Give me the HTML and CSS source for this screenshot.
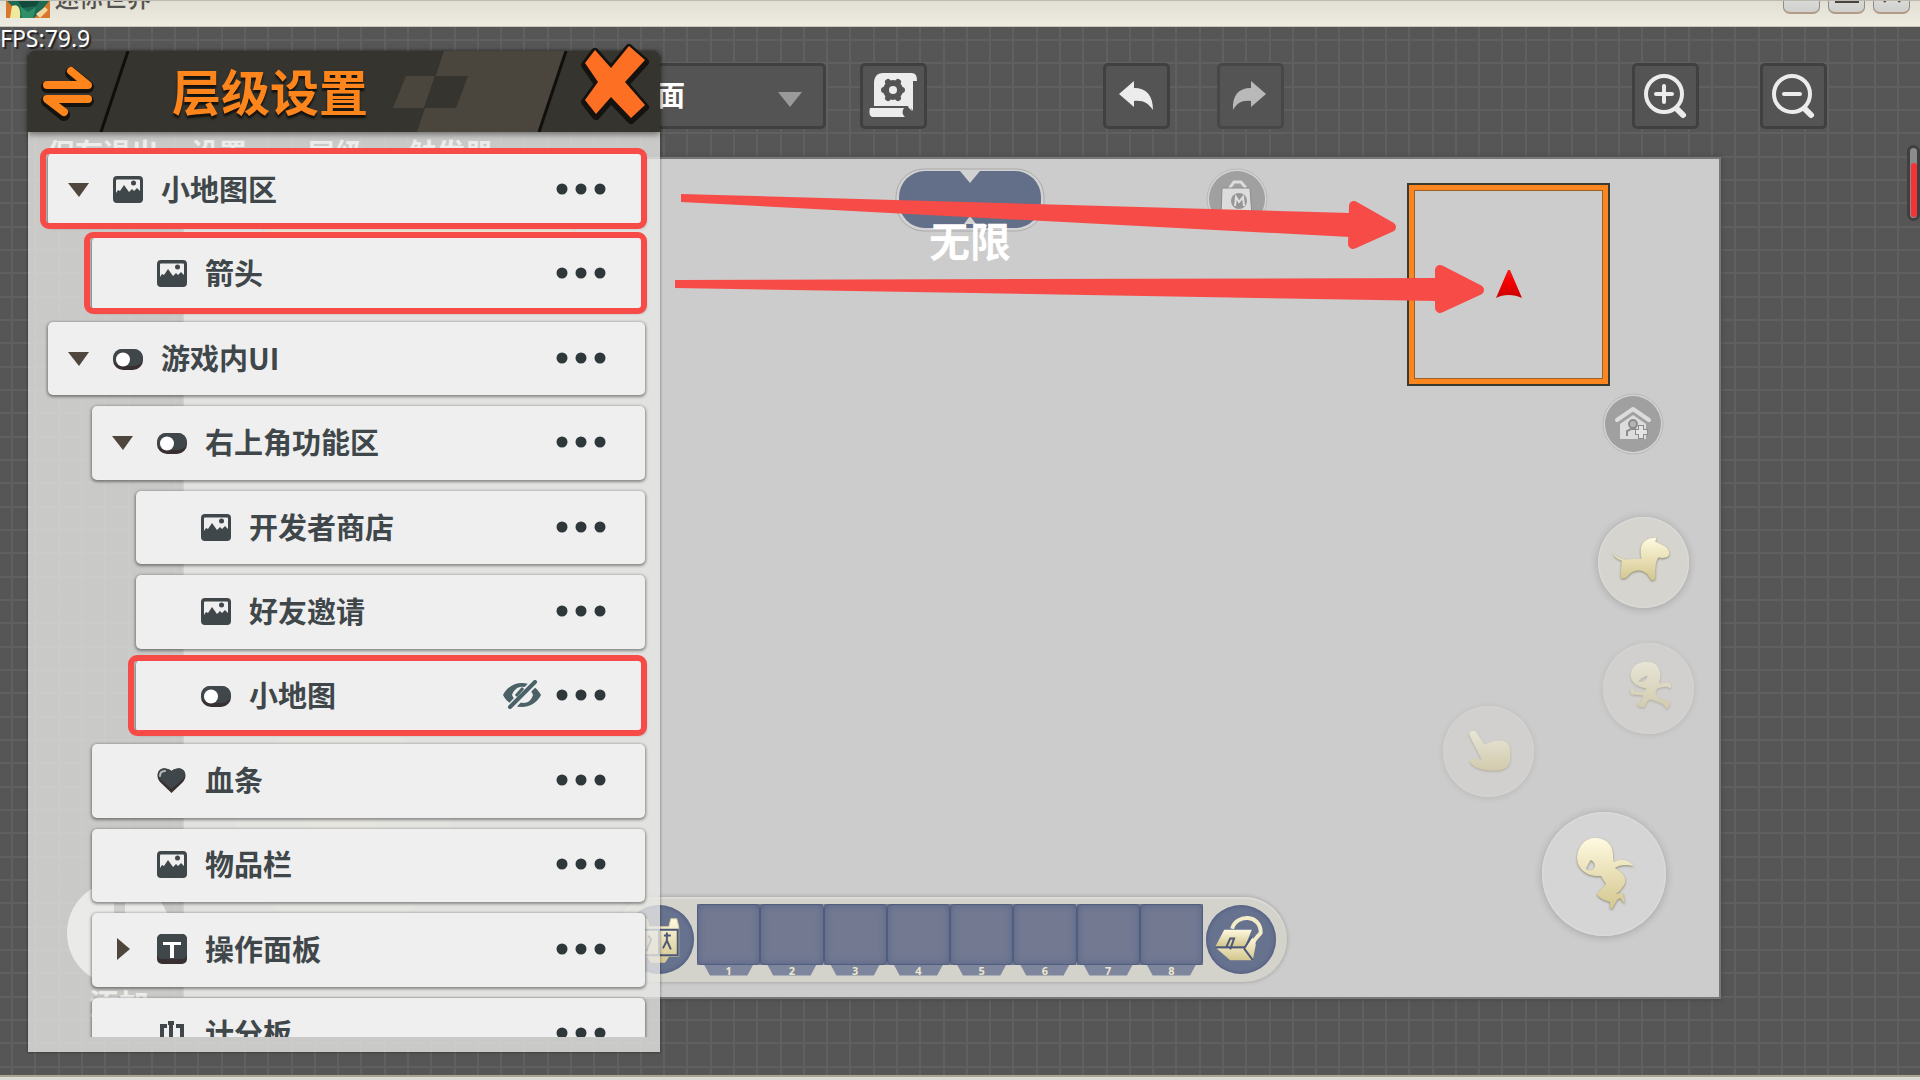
FILE: index.html
```html
<!DOCTYPE html>
<html lang="zh-CN">
<head>
<meta charset="utf-8">
<title>迷你世界</title>
<link rel="stylesheet" href="styles.css">
</head>
<body>
<svg class="defs" aria-hidden="true">
  <defs>
    <linearGradient id="gold" x1="0" y1="0" x2="0" y2="1"><stop offset="0" stop-color="#fffae0"/><stop offset="1" stop-color="#d3c68e"/></linearGradient>
    <linearGradient id="red" x1="0" y1="0" x2="0" y2="1"><stop offset="0" stop-color="#f02020"/><stop offset=".4" stop-color="#f80000"/><stop offset="1" stop-color="#c80000"/></linearGradient>
    <symbol id="i-image" viewBox="0 0 30 30">
      <path fill="#3f474a" fill-rule="evenodd" d="M4 2h22a4 4 0 0 1 4 4v19a4 4 0 0 1-4 4H4a4 4 0 0 1-4-4V6a4 4 0 0 1 4-4zM4 5.500a1 1 0 0 0-1 1V19l2-3 2 1 4-6 5 7 3-3 2 2 3-3 3 3V6.500a1 1 0 0 0-1-1z"/>
      <circle cx="20.500" cy="9" r="2.500" fill="#3f474a"/>
    </symbol>
    <symbol id="i-toggle" viewBox="0 0 30 30">
      <rect x="0" y="6" width="30" height="21" rx="10" fill="#382f30"/>
      <rect x="0" y="6" width="30" height="17" rx="9" fill="#3f474a"/>
      <circle cx="10" cy="16.500" r="7" fill="#fff"/>
    </symbol>
    <symbol id="i-heart" viewBox="0 0 30 30">
      <path fill="#382f30" d="M14.500 28L3 17C-4 8 5-1 14.500 6 24-1 33 8 26 17z"/>
      <path fill="#3f474a" d="M14.500 24L3 14C-3 7 5-1 14.500 6 24-1 32 7 26 14z"/>
      <path fill="none" stroke="#b5bbbc" stroke-width="2" stroke-linecap="round" d="M3 11c0-3 2-5 5-5"/>
    </symbol>
    <symbol id="i-text" viewBox="0 0 30 30">
      <rect width="30" height="30" rx="5" fill="#382f30"/>
      <rect width="30" height="25" rx="5" fill="#3f474a"/>
      <path fill="#fff" d="M6 8h18v3h-7v13h-4V11H6z"/>
    </symbol>
    <symbol id="i-score" viewBox="0 0 30 30">
      <path fill="none" stroke="#3f474a" stroke-width="4" d="M10 8H5v19h5M19 8h6v19h-6M14 4v24M11 5h6"/>
    </symbol>
    <symbol id="i-hidden" viewBox="0 0 40 30">
      <path fill="#4a6166" fill-rule="evenodd" d="M1 15C9-1 31-1 39 15 31 31 9 31 1 15zm9 0c3 8 17 13 21 0-3-10-17-12-21 0z"/>
      <path stroke="#efefef" stroke-width="8" d="M8 28L33 2"/>
      <path stroke="#4a6166" stroke-width="4" stroke-linecap="round" d="M8 27L33 2"/>
      <path stroke="#4a6166" stroke-width="3" d="M14 16l7-8"/>
    </symbol>
    <symbol id="i-down" viewBox="0 0 22 16"><path fill="#4e453c" d="M0 2h21L11 16z"/></symbol>
    <symbol id="i-right" viewBox="0 0 22 24"><path fill="#4e453c" d="M5 1l13 11L5 23z"/></symbol>
    <symbol id="i-dots" viewBox="0 0 50 12"><g fill="#2e373a"><circle cx="6" cy="6" r="5.500"/><circle cx="25" cy="6" r="5.500"/><circle cx="44" cy="6" r="5.500"/></g></symbol>
  </defs>
</svg>

<header class="titlebar">
  <svg class="app-icon" viewBox="0 0 44 44" aria-hidden="true">
    <rect width="44" height="44" rx="5" fill="#1d6b55"/>
    <path fill="#d9772a" d="M0 26l6 6 5 12H0zM44 26l-10 12-6 6h16z"/>
    <path fill="#124a3b" d="M10 22l16 2 12-4-8 12-14 2z"/>
    <path fill="#f0e89c" d="M6 32c6-3 9 2 8 12H4z"/>
    <path fill="#2f8f66" d="M14 32l8 6 8-5-3 11H16z"/>
    <path fill="#f3d7a0" d="M30 40l9-7 3 3-8 8z"/>
  </svg>
  <span class="app-name">迷你世界</span>
  <div class="win-buttons">
    <button aria-label="最小化"></button>
    <button aria-label="最大化"><svg viewBox="0 0 24 24"><rect x="2" y="2" width="20" height="16" fill="none" stroke="#4a4440" stroke-width="4"/></svg></button>
    <button aria-label="关闭"><svg viewBox="0 0 24 24"><path d="M3 0l18 18M21 0L3 18" stroke="#4a4440" stroke-width="5"/></svg></button>
  </div>
</header>

<main class="stage">
  <svg class="grid" aria-hidden="true">
    <defs>
      <pattern id="cols" width="163" height="70" patternUnits="userSpaceOnUse"><path stroke="#606060" stroke-width="2" d="M12 0v70M35 0v70M59 0v70M82 0v70M105 0v70M129 0v70M152 0v70"/></pattern>
      <pattern id="rows" width="163" height="70" patternUnits="userSpaceOnUse"><path stroke="#606060" stroke-width="2" d="M0 13h163M0 36h163M0 60h163"/></pattern>
    </defs>
    <rect width="100%" height="100%" fill="url(#cols)"/>
    <rect width="100%" height="100%" fill="url(#rows)"/>
  </svg>
  <div class="fps">FPS:79.9</div>

  <nav class="toolbar">
    <div class="menu">
      <button>保存退出</button><button>设置</button><button>层级</button><button>触发器</button>
    </div>
    <div class="picker">
      <select aria-label="界面"><option>主界面</option></select>
      <svg viewBox="0 0 24 16" aria-hidden="true"><path fill="#9a9a9a" d="M0 0h24L12 15z"/></svg>
    </div>
    <button class="tool script" aria-label="脚本">
      <svg viewBox="0 0 66 66"><path fill="#ececec" d="M14 43V20c0-6 3-10 9-10h28c5 0 6 3 6 8h-4v30l-3-5z"/><path fill="#ececec" d="M10 45h34c-2 3-2 6 1 9H13c-4 0-4-6-3-9z"/><path fill="#ececec" d="M50 40l2 8-4-4z"/><circle cx="33" cy="27" r="10" fill="#545454"/><path stroke="#545454" stroke-width="6" stroke-linecap="round" d="M28 19l10 16M38 19L28 35M24 27h18"/><circle cx="33" cy="27" r="4" fill="#ececec"/></svg>
    </button>
    <div class="history">
      <button class="tool" aria-label="撤销"><svg viewBox="0 0 66 66"><path fill="#ececec" d="M16 31l15-13v7c13 0 19 8 19 22-5-7-10-10-19-9v6z"/></svg></button>
      <button class="tool" aria-label="重做" disabled><svg viewBox="0 0 66 66"><path fill="#f0f0f0" d="M49 31L34 18v7c-13 0-19 8-18 22 4-7 9-10 18-9v6z"/></svg></button>
    </div>
    <div class="zoom">
      <button class="tool" aria-label="放大"><svg viewBox="0 0 66 66"><g fill="none" stroke="#ececec" stroke-linecap="round"><circle cx="32" cy="31" r="18" stroke-width="4"/><path stroke-width="4" d="M24 31h16M32 23v16"/><path stroke-width="6" d="M45 46l6 6"/></g></svg></button>
      <button class="tool" aria-label="缩小"><svg viewBox="0 0 66 66"><g fill="none" stroke="#ececec" stroke-linecap="round"><circle cx="32" cy="31" r="18" stroke-width="4"/><path stroke-width="4" d="M24 31h16"/><path stroke-width="6" d="M45 46l6 6"/></g></svg></button>
    </div>
  </nav>

  <section class="canvas">
    <div class="buff-bar"></div>
    <div class="joystick"></div>

    <div class="timer">
      <svg viewBox="0 0 150 64" aria-hidden="true"><rect x="1" y="1" width="148" height="62" rx="28" fill="#d2d2d2" stroke="#a9a9a9"/><rect x="4" y="3" width="142" height="57" rx="26" fill="#636e89"/><path fill="#d2d2d2" d="M65 3h20L75 15zM69 56l6-8 6 8z"/></svg>
      <span>无限</span>
    </div>

    <button class="round small shop" aria-label="开发者商店">
      <svg viewBox="0 0 62 62"><circle cx="31" cy="31" r="30" fill="#d2d2d2" stroke="#b8b8b8"/><circle cx="31" cy="31" r="28" fill="#a0a0a0"/><path fill="none" stroke="#dcdcdc" stroke-width="3" d="M23 21l5-7h7l5 6"/><path fill="#dcdcdc" stroke="#8c8c8c" d="M16 20h28l2 28H15z"/><circle cx="33" cy="33" r="8" fill="#969696"/><path fill="none" stroke="#e0e0e0" stroke-width="2" d="M29 38l1-9 3 5 4-5 1 9"/></svg>
    </button>

    <div class="minimap">
      <svg viewBox="0 0 26 30" aria-hidden="true"><path fill="url(#red)" d="M12 0L0 28c7-4 18-4 26 0L14 0z"/></svg>
    </div>

    <button class="round small invite" aria-label="好友邀请">
      <svg viewBox="0 0 62 62"><circle cx="31" cy="31" r="30" fill="#d2d2d2" stroke="#b8b8b8"/><circle cx="31" cy="31" r="28" fill="#a0a0a0"/><path fill="none" stroke="#dcdcdc" stroke-width="4" stroke-linecap="round" stroke-linejoin="round" d="M15 27l16-11 16 11"/><path fill="#dcdcdc" d="M18 31l13-9 13 9v15H18z"/><circle cx="31" cy="31" r="4" fill="#b4b4b4" stroke="#8c8c8c" stroke-width="2"/><path fill="none" stroke="#8c8c8c" stroke-width="2" d="M25 43v-5l4-2h5"/><path stroke="#8c8c8c" stroke-width="6" d="M39 32v14M33 39h13"/><path stroke="#e4e4e4" stroke-width="4" d="M39 33v12M34 39h11"/></svg>
    </button>

    <button class="round medium mount" aria-label="坐骑"><svg viewBox="0 0 92 92"><path fill="url(#gold)" d="M15 35c3 5 7 7 12 8l17-1c-3-14 2-21 15-21l-1 4c6 3 14 5 14 12 0 4-5 5-11 4-3 4-3 11-3 19 0 5-4 5-6 1-4-9-17-9-22-1-4 4-8 2-7-1l1-15c-5-2-9-5-9-10z"/></svg></button>
    <button class="round medium faded run" aria-label="奔跑"><svg viewBox="0 0 92 92"><path fill="url(#gold)" fill-rule="evenodd" d="M44 19c10 0 14 6 14 14 0 4-2 6-1 8l8-1c4 0 5 4 3 6-3-3-7-2-13 0l-2 4c2 6 8 8 14 9 1 3 0 6-3 8-1-6-8-7-15-10-5 0-5 4-7 8-3 0-7 0-8-4l4-1 3-7-9-1c-4 2-6-4-3-7l4 4 8 1 3-4C34 44 27 39 28 31c1-7 7-12 16-12zm1 14c-4 1-8 4-9 6 3 1 7 0 8-3z"/></svg></button>
    <button class="round medium faded use" aria-label="使用"><svg viewBox="0 0 92 92"><path fill="url(#gold)" d="M27 30c-2-4 4-7 7-3l8 12c5-2 9-4 15-4 7 0 11 4 11 11v9c-2 10-10 11-23 10-7-1-15-3-18-9 2-3 7-3 12-2z"/></svg></button>
    <button class="round large jump" aria-label="跳跃"><svg viewBox="0 0 124 124"><path fill="url(#gold)" fill-rule="evenodd" d="M53 26c12 0 18 8 18 17 0 3 0 5 1 7 7-4 14-3 20 4-9-2-15-1-19 2 11 7 13 13 7 20-2 3-4 4-6 6l7-1 2 11-5-6-3 2-5 9-2-1v-6c-6-2-11-4-13-8l9-10-5-8c-14 1-24-7-24-19 1-11 8-19 18-19zm-4 22c-2 2-4 6-5 9 4 3 8 1 9-3 0-3-2-5-4-6z"/></svg></button>

    <div class="hotbar">
      <button class="knob" aria-label="背包"><svg viewBox="0 0 70 70"><path fill="url(#gold)" stroke="#d9cf9f" d="M14 22l3-8h6l2 8h20l2-8h6l2 8v30H45l-4 6H27l-4-6H14z"/><path fill="none" stroke="#4c5878" stroke-width="2" d="M16 25h38v26H16zM35 25v26M24 31l3 4-5 12M40 31h7M43 28v8l4 9M43 36l-4 8"/></svg></button>
      <ol class="slots">
        <li><span>1</span></li><li><span>2</span></li><li><span>3</span></li><li><span>4</span></li><li><span>5</span></li><li><span>6</span></li><li><span>7</span></li><li><span>8</span></li>
      </ol>
      <button class="knob" aria-label="工具箱"><svg viewBox="0 0 70 70"><path fill="none" stroke="#f3ecc8" stroke-width="4" d="M26 24c4-15 29-15 29 4-2 4-6 4-8 12"/><path fill="url(#gold)" d="M9 42l9-17h28l-7 17z"/><path fill="url(#gold)" d="M10 44h28l8-12 4 8-3 16H24z"/><path fill="none" stroke="#4c5878" stroke-width="2" d="M9 43h30l7-11M38 44l9 12M20 43l4-9h4l-4 11"/></svg></button>
    </div>
  </section>

  <div class="add"><button aria-label="添加"></button><span>添加</span></div>
  <div class="level"><i></i></div>

  <aside class="panel">
    <header class="panel-head">
      <svg class="head-art" viewBox="0 0 632 81" aria-hidden="true">
        <path fill="#4a463e" d="M416 0h123l-27 81H389zM378 25h29l-11 32h-31z"/>
        <path fill="#36342e" d="M407 25h33l-12 32h-32z"/>
        <path fill="none" stroke="#100f0d" stroke-width="3" d="M100 0L73 81M538 0l-27 81"/>
      </svg>
      <button class="swap" aria-label="切换"><svg viewBox="0 0 60 60"><g fill="none" stroke-linecap="round" stroke-linejoin="round"><path stroke="#15130f" stroke-width="12" d="M10 25h41L34 11M51 39H10l17 14"/><path stroke="#fd851b" stroke-width="8" d="M10 23h41L34 9M51 37H10l17 13"/></g></svg></button>
      <h1>层级设置</h1>
      <button class="close" aria-label="关闭面板"><svg viewBox="0 0 68 80"><path fill="#15130f" stroke="#15130f" stroke-width="8" stroke-linejoin="round" d="M16 10l16 18L50 6l16 14-20 22 20 23-14 13-20-21-15 17L6 60l13-18L6 23z"/><path fill="#fd6f22" d="M16 8l16 18L50 4l16 14-20 22 20 23-14 13-20-21-15 17L6 58l13-18L6 21z"/></svg></button>
    </header>
    <div class="panel-body">
      <ul class="tree">
        <li class="row marked"><button class="fold" aria-label="收起"><svg><use href="#i-down"/></svg></button><svg class="kind"><use href="#i-image"/></svg><span>小地图区</span><button class="more" aria-label="更多"><svg><use href="#i-dots"/></svg></button></li>
        <li class="row l1 marked"><i class="fold"></i><svg class="kind"><use href="#i-image"/></svg><span>箭头</span><button class="more" aria-label="更多"><svg><use href="#i-dots"/></svg></button></li>
        <li class="row"><button class="fold" aria-label="收起"><svg><use href="#i-down"/></svg></button><svg class="kind"><use href="#i-toggle"/></svg><span>游戏内UI</span><button class="more" aria-label="更多"><svg><use href="#i-dots"/></svg></button></li>
        <li class="row l1"><button class="fold" aria-label="收起"><svg><use href="#i-down"/></svg></button><svg class="kind"><use href="#i-toggle"/></svg><span>右上角功能区</span><button class="more" aria-label="更多"><svg><use href="#i-dots"/></svg></button></li>
        <li class="row l2"><i class="fold"></i><svg class="kind"><use href="#i-image"/></svg><span>开发者商店</span><button class="more" aria-label="更多"><svg><use href="#i-dots"/></svg></button></li>
        <li class="row l2"><i class="fold"></i><svg class="kind"><use href="#i-image"/></svg><span>好友邀请</span><button class="more" aria-label="更多"><svg><use href="#i-dots"/></svg></button></li>
        <li class="row l2 marked"><i class="fold"></i><svg class="kind"><use href="#i-toggle"/></svg><span>小地图</span><button class="eye" aria-label="显示"><svg><use href="#i-hidden"/></svg></button><button class="more" aria-label="更多"><svg><use href="#i-dots"/></svg></button></li>
        <li class="row l1"><i class="fold"></i><svg class="kind"><use href="#i-heart"/></svg><span>血条</span><button class="more" aria-label="更多"><svg><use href="#i-dots"/></svg></button></li>
        <li class="row l1"><i class="fold"></i><svg class="kind"><use href="#i-image"/></svg><span>物品栏</span><button class="more" aria-label="更多"><svg><use href="#i-dots"/></svg></button></li>
        <li class="row l1"><button class="fold side" aria-label="展开"><svg><use href="#i-right"/></svg></button><svg class="kind"><use href="#i-text"/></svg><span>操作面板</span><button class="more" aria-label="更多"><svg><use href="#i-dots"/></svg></button></li>
        <li class="row l1"><i class="fold"></i><svg class="kind"><use href="#i-score"/></svg><span>计分板</span><button class="more" aria-label="更多"><svg><use href="#i-dots"/></svg></button></li>
      </ul>
    </div>
  </aside>
</main>
<div class="base-edge"></div>

<svg class="pointers" aria-hidden="true">
  <g fill="#f74b48" stroke="#f74b48" stroke-linejoin="round">
    <path stroke="none" d="M681 194l669 19v24L681 202z"/>
    <path stroke-width="10" d="M1354 206l37 21-38 17z"/>
    <path stroke="none" d="M675 280l762-2v23l-762-13z"/>
    <path stroke-width="10" d="M1440 270l39 20-39 18z"/>
  </g>
</svg>
</body>
</html>
```
FILE: styles.css
```css
* { box-sizing: border-box; }

html, body { height: 100%; }

body {
  margin: 0;
  display: flex;
  flex-direction: column;
  overflow: hidden;
  background: #565656;
  font-family: "Noto Sans CJK SC", "Noto Sans", sans-serif;
}

button {
  margin: 0;
  padding: 0;
  border: 0;
  background: none;
  font: inherit;
  color: inherit;
}

svg { display: block; }

.defs { position: absolute; width: 0; height: 0; }

/* Window frame */
.titlebar {
  flex: none;
  display: flex;
  align-items: flex-end;
  height: 27px;
  padding: 0 10px 0 6px;
  overflow: hidden;
  border-top: 1px solid #bdb9ae;
  border-bottom: 1px solid #c9c8b8;
  background: linear-gradient(#e2dfd4, #eeece0);
}

.app-icon { flex: none; width: 44px; height: 44px; margin-bottom: 8px; }

.app-name {
  margin: 0 0 17px 5px;
  font-size: 24px;
  line-height: 24px;
  font-weight: 500;
  color: #55534f;
}

.win-buttons { display: flex; gap: 8px; margin: 0 0 12px auto; }

.win-buttons button {
  width: 37px;
  height: 37px;
  padding: 2px 6px;
  border: 1px solid #8f8c86;
  border-bottom: 2px solid #b39a86;
  border-radius: 7px;
  background: linear-gradient(#eee, #cfcfcc);
}

.win-buttons svg { width: 24px; height: 24px; }

.base-edge {
  flex: none;
  height: 5px;
  border-top: 2px solid #a9a48f;
  background: #dcdad6;
}

/* Editor area */
.stage {
  position: relative;
  flex: 1;
  min-height: 0;
  display: flex;
  flex-direction: column;
  gap: 30px;
  padding-top: 36px;
}

.grid { position: absolute; inset: 0; width: 100%; height: 100%; }

.fps {
  position: absolute;
  top: 0;
  left: 0;
  font-family: "Noto Sans", sans-serif;
  font-size: 23px;
  line-height: 22px;
  color: #fff;
  text-shadow: 2px 2px 1px #222;
}

/* Toolbar */
.toolbar {
  position: relative;
  flex: none;
  display: flex;
  height: 66px;
  padding: 0 93px 0 45px;
}

.menu { display: flex; color: #fff; }

.menu button {
  width: 116px;
  height: 104px;
  padding-top: 74px;
  font-size: 28px;
  line-height: 30px;
  font-weight: bold;
}

.picker { position: relative; width: 266px; margin-left: 51px; }

.picker select {
  appearance: none;
  width: 100%;
  height: 66px;
  padding: 0 38px 4px;
  border: 3px solid #404040;
  border-radius: 5px;
  background: #545454;
  color: #fff;
  font: bold 28px "Noto Sans CJK SC", sans-serif;
}

.picker svg { position: absolute; top: 29px; right: 24px; width: 24px; height: 16px; }

.tool {
  width: 67px;
  height: 66px;
  border: 3px solid #404040;
  border-radius: 5px;
  background: #545454;
}

.tool svg { width: 66px; height: 66px; margin: -3px; }
.tool:disabled { border-color: #474747; }
.tool:disabled svg { opacity: .65; }

.script { margin-left: 34px; }
.history { display: flex; gap: 47px; margin-left: 176px; }
.zoom { display: flex; gap: 61px; margin-left: auto; }

/* Game screen being edited */
.canvas {
  position: relative;
  flex: 1;
  margin: 0 201px 78px 184px;
  background: #ccc;
  box-shadow: 0 0 0 2px #777, 0 0 5px 2px #444;
}

.buff-bar {
  position: absolute;
  top: 60px;
  left: 78px;
  width: 313px;
  height: 14px;
  border: 1px solid #c8a080;
  border-radius: 4px;
  background: #f0c890;
}

.joystick {
  position: absolute;
  top: 560px;
  left: 52px;
  width: 214px;
  height: 214px;
  border-radius: 50%;
  background: radial-gradient(#dedac4 0 34px, #d2d2d0 35px);
}

.timer {
  position: absolute;
  top: 9px;
  left: 711px;
  width: 150px;
}

.timer span {
  display: block;
  margin-top: -18px;
  font-size: 41px;
  line-height: 50px;
  font-weight: bold;
  text-align: center;
  color: #fff;
}

.minimap {
  position: absolute;
  top: 24px;
  right: 109px;
  display: flex;
  justify-content: center;
  align-items: center;
  width: 203px;
  height: 203px;
  border: 2px solid #3a3a31;
  box-shadow: inset 0 0 0 5px #fb8620, inset 0 0 0 6px #9a6128;
}

.minimap svg { width: 26px; height: 30px; }

.round { position: absolute; border-radius: 50%; }
.round svg { width: 100%; height: 100%; }
.small { width: 62px; height: 62px; }
.medium { width: 91px; height: 91px; background: #d5d4cf; }
.large { width: 124px; height: 124px; background: #d5d5d5; }
.medium, .large { box-shadow: 0 1px 8px rgba(0, 0, 0, .2), inset 0 0 2px #eee; }
.medium svg, .large svg { filter: drop-shadow(0 1px 1px rgba(90, 85, 50, .6)); }
.faded { background: #d1d0ce; box-shadow: 0 1px 6px rgba(0, 0, 0, .1), inset 0 0 2px #ddd; }
.faded svg { opacity: .5; }

.shop { top: 9px; right: 451px; }
.invite { top: 234px; right: 55px; }
.mount { top: 358px; right: 30px; }
.run { top: 484px; right: 25px; }
.use { top: 547px; right: 185px; }
.jump { bottom: 61px; right: 53px; }

/* Item bar */
.hotbar {
  position: absolute;
  bottom: 15px;
  left: 428px;
  display: flex;
  align-items: center;
  gap: 3px;
  width: 675px;
  height: 85px;
  padding: 0 11px 0 12px;
  border-radius: 43px;
  background: #d3d2cb;
  box-shadow: 0 0 4px rgba(0, 0, 0, .25), inset 0 2px 1px #dcdbd6;
}

.knob {
  flex: none;
  width: 70px;
  height: 69px;
  border-radius: 50%;
  background: #67728f;
  box-shadow: inset 0 0 4px #46527a;
}

.knob svg { width: 70px; height: 69px; }

.slots {
  flex: 1;
  display: flex;
  margin: 0;
  padding: 0;
  list-style: none;
}

.slots li {
  position: relative;
  flex: 1;
  padding-top: 61px;
  background: linear-gradient(#727991, #727991) center top / 100% 61px no-repeat;
}

.slots li::before {
  content: "";
  position: absolute;
  inset: 0 0 11px;
  border: 1px solid #515d7c;
  border-radius: 4px;
  box-shadow: inset 0 0 7px #59658a;
}

.slots span {
  display: block;
  height: 11px;
  margin: 0 7px;
  clip-path: polygon(0 0, 100% 0, 88% 100%, 12% 100%);
  background: #7e869e;
  font: bold 11px/11px "Noto Sans", sans-serif;
  text-align: center;
  color: #ece6cc;
}

.add {
  position: absolute;
  bottom: 56px;
  left: 67px;
  width: 104px;
  text-align: center;
  color: #fff;
  font-size: 30px;
  line-height: 34px;
  font-weight: bold;
}

.add button {
  display: block;
  width: 104px;
  height: 104px;
  border-radius: 50%;
  background: linear-gradient(#777, #777) center / 11px 60px no-repeat, #f0f0ee;
}

.level {
  position: absolute;
  top: 118px;
  right: 0;
  width: 13px;
  height: 76px;
  padding: 15px 0 0 1px;
  border: 3px solid #404040;
  border-radius: 7px;
  background: #8c8c8c;
}

.level i { display: block; height: 54px; border-radius: 3px; background: #f73236; }

/* Hierarchy panel */
.panel {
  position: absolute;
  top: 24px;
  bottom: 23px;
  left: 28px;
  width: 632px;
  display: flex;
  flex-direction: column;
  background: rgba(232, 232, 229, .79);
  border-radius: 5px 5px 0 0;
  box-shadow: 0 0 3px rgba(0, 0, 0, .5);
}

.panel-head {
  position: relative;
  flex: none;
  display: flex;
  align-items: center;
  height: 81px;
  padding: 0 13px 0 9px;
  border-radius: 5px 5px 0 0;
  background: #36342e;
  box-shadow: 0 2px 6px rgba(0, 0, 0, .5);
}

.head-art { position: absolute; inset: 0; width: 632px; height: 81px; }

.swap { position: relative; width: 60px; height: 60px; }
.swap svg { width: 60px; height: 60px; }

.panel-head h1 {
  position: relative;
  margin: 0 0 4px 75px;
  font-size: 49px;
  line-height: 56px;
  font-weight: bold;
  color: #fd851b;
  text-shadow: 0 3px 2px #14120e;
}

.close { position: relative; margin: -20px 0 0 auto; width: 68px; height: 80px; }
.close svg { width: 68px; height: 80px; overflow: visible; }

.panel-body {
  flex: 1;
  min-height: 0;
  margin-bottom: 15px;
  padding: 21px 15px 0 20px;
  overflow: hidden;
}

.tree {
  display: grid;
  grid-auto-rows: 1fr;
  gap: 11px;
  height: calc(100% + 34px);
  margin: 0;
  padding: 0;
  list-style: none;
}

.row {
  position: relative;
  display: flex;
  align-items: center;
  padding: 0 39px 2px 20px;
  border-radius: 5px;
  background: #efefef;
  box-shadow: 0 1px 3px 1px rgba(0, 0, 0, .4);
  font-size: 29px;
  line-height: 36px;
  font-weight: bold;
  color: #3f474a;
}

.row span { padding-bottom: 2px; }

.l1 { margin-left: 44px; }
.l2 { margin-left: 88px; }

.fold { flex: none; width: 22px; height: 16px; margin-right: 23px; }
.fold svg { width: 22px; height: 16px; }
.side, .side svg { height: 24px; }
.kind { flex: none; width: 30px; height: 30px; margin-right: 18px; }
.eye { margin-left: auto; margin-right: 14px; }
.eye svg { width: 40px; height: 30px; }
.more { margin-left: auto; }
.eye + .more { margin-left: 0; }
.more svg { width: 50px; height: 12px; }

.marked::after {
  content: "";
  position: absolute;
  inset: -5px -2px -3px -8px;
  border: 6px solid #f74b48;
  border-radius: 9px;
}

/* Red pointers drawn over everything */
.pointers {
  position: absolute;
  top: 0;
  left: 0;
  width: 100%;
  height: 100%;
  pointer-events: none;
}
```
